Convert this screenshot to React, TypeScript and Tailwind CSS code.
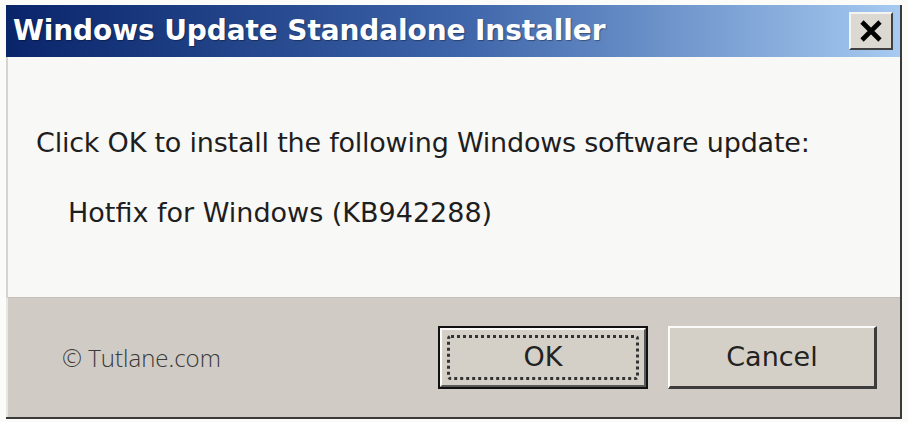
export default function App() {
  return (
    <div className="min-h-screen w-[908px] h-[422px] bg-[#fbfbf9] pl-[6px] pt-[5px]">
      <div className="w-[896px] h-[414px] flex flex-col border-r-2 border-b-2 border-[#3a3a3a]">
        {/* Title bar */}
        <div className="h-[52px] flex items-center justify-between bg-gradient-to-r from-[#0a246a] via-[#3d63a8] to-[#a6caf0] pl-[7px] pr-[7px]">
          <span
            className="text-white font-bold text-[28px] leading-none tracking-[-0.1px] [text-shadow:1px_1px_1px_rgba(0,0,0,0.35)]"
            style={{ fontFamily: '"DejaVu Sans", Verdana, sans-serif' }}
          >
            Windows Update Standalone Installer
          </span>
          <button className="w-[44px] h-[38px] flex items-center justify-center bg-[#dcd9d3] border-t-2 border-l-2 border-[#f4f4f2] border-r-2 border-b-2 border-r-[#404040] border-b-[#404040]">
            <svg width="24" height="22" viewBox="0 0 24 22">
              <path d="M3 2 L21 20 M21 2 L3 20" stroke="#000" strokeWidth="4.6" strokeLinecap="butt" />
            </svg>
          </button>
        </div>

        {/* Message area */}
        <div
          className="h-[240px] bg-[#f8f8f6] border-l-2 border-[#d6d4cf] pt-[72px] pl-[28px] text-[#1e1e1e]"
          style={{ fontFamily: '"DejaVu Sans", sans-serif' }}
        >
          <p className="text-[27px] leading-none tracking-[-0.22px]">Click OK to install the following Windows software update:</p>
          <p className="text-[27px] leading-none mt-[43px] pl-[32px]">Hotfix for Windows (KB942288)</p>
        </div>

        {/* Footer */}
        <div className="flex-1 bg-[#d0ccc5] border-t border-[#c4c0b9] border-l-2 border-l-[#e8e6e2] flex items-center pr-[23px]">
          <span
            className="ml-[54px] text-[24px] text-[#3a3a3a] leading-none font-light"
            style={{ fontFamily: '"Open Sans", "Noto Sans", sans-serif' }}
          >
            © Tutlane.com
          </span>
          <div className="ml-auto flex gap-[20px]" style={{ fontFamily: '"DejaVu Sans", sans-serif' }}>
            <button className="w-[210px] h-[63px] border-2 border-[#111] bg-[#d4d0c8] p-0">
              <div className="w-full h-full border-t-2 border-l-2 border-[#fbfbf9] border-r-2 border-b-2 border-r-[#5a5a5a] border-b-[#5a5a5a] p-[5px]">
                <div className="w-full h-full border-[3px] border-dotted border-[#333] rounded-[4px] flex items-center justify-center text-[27px] text-[#222]">
                  OK
                </div>
              </div>
            </button>
            <button className="w-[209px] h-[63px] bg-[#d4d0c8] border-t-2 border-l-2 border-[#fbfbf9] border-r-[3px] border-b-[3px] border-r-[#3c3c3c] border-b-[#3c3c3c] flex items-center justify-center text-[27px] text-[#222]">
              Cancel
            </button>
          </div>
        </div>
      </div>
    </div>
  );
}
